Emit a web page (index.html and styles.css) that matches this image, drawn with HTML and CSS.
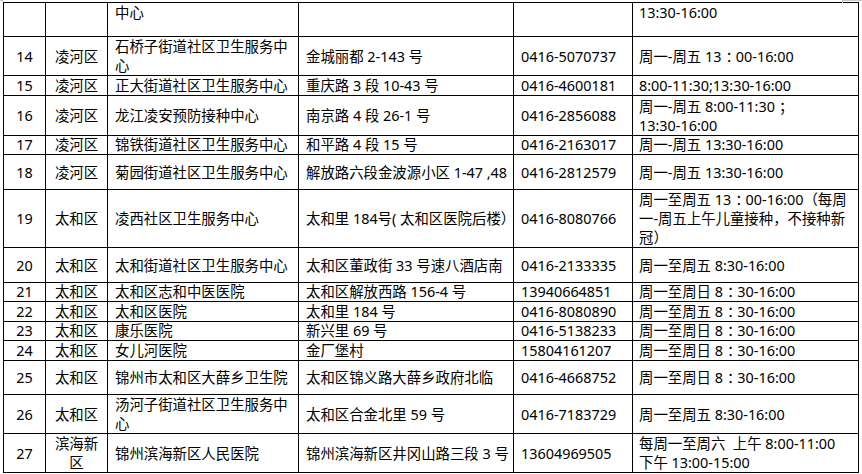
FILE: index.html
```html
<!DOCTYPE html>
<html lang="zh-CN">
<head>
<meta charset="utf-8">
<title>接种点列表</title>
<link rel="stylesheet" href="styles.css">
</head>
<body>
<span class="mark mark-left"></span>
<span class="mark mark-right"></span>
<table class="sites">
  <colgroup>
    <col class="c-no">
    <col class="c-area">
    <col class="c-name">
    <col class="c-addr">
    <col class="c-tel">
    <col class="c-time">
  </colgroup>
  <tbody>
    <tr class="r34 cont">
      <td></td><td></td><td class="l">中心</td><td class="l"></td><td class="l"></td><td class="l">13:30-16:00</td>
    </tr>
    <tr class="r39">
      <td>14</td><td>凌河区</td><td class="l">石桥子街道社区卫生服务中<br>心</td><td class="l">金城丽都 2-143 号</td><td class="l">0416-5070737</td><td class="l">周一-周五 13<span class="fw">：</span>00-16:00</td>
    </tr>
    <tr class="r20">
      <td>15</td><td>凌河区</td><td class="l">正大街道社区卫生服务中心</td><td class="l">重庆路 3 段 10-43 号</td><td class="l">0416-4600181</td><td class="l">8:00-11:30;13:30-16:00</td>
    </tr>
    <tr class="r40">
      <td>16</td><td>凌河区</td><td class="l">龙江凌安预防接种中心</td><td class="l">南京路 4 段 26-1 号</td><td class="l">0416-2856088</td><td class="l">周一-周五 8:00-11:30<span class="fw">；</span><br>13:30-16:00</td>
    </tr>
    <tr class="r19">
      <td>17</td><td>凌河区</td><td class="l">锦铁街道社区卫生服务中心</td><td class="l">和平路 4 段 15 号</td><td class="l">0416-2163017</td><td class="l">周一-周五 13:30-16:00</td>
    </tr>
    <tr class="r35">
      <td>18</td><td>凌河区</td><td class="l">菊园街道社区卫生服务中心</td><td class="l">解放路六段金波源小区 1-47 ,48</td><td class="l">0416-2812579</td><td class="l">周一-周五 13:30-16:00</td>
    </tr>
    <tr class="r58">
      <td>19</td><td>太和区</td><td class="l">凌西社区卫生服务中心</td><td class="l">太和里 184号( 太和区医院后楼）</td><td class="l">0416-8080766</td><td class="l">周一至周五 13<span class="fw">：</span>00-16:00（每周<br>一-周五上午儿童接种，不接种新<br>冠）</td>
    </tr>
    <tr class="r35">
      <td>20</td><td>太和区</td><td class="l">太和街道社区卫生服务中心</td><td class="l">太和区董政街 33 号速八酒店南</td><td class="l">0416-2133335</td><td class="l">周一至周五 8:30-16:00</td>
    </tr>
    <tr class="r19">
      <td>21</td><td>太和区</td><td class="l">太和区志和中医医院</td><td class="l">太和区解放西路 156-4 号</td><td class="l">13940664851</td><td class="l">周一至周日 8<span class="fw">：</span>30-16:00</td>
    </tr>
    <tr class="r20">
      <td>22</td><td>太和区</td><td class="l">太和区医院</td><td class="l">太和里 184 号</td><td class="l">0416-8080890</td><td class="l">周一至周五 8<span class="fw">：</span>30-16:00</td>
    </tr>
    <tr class="r19">
      <td>23</td><td>太和区</td><td class="l">康乐医院</td><td class="l">新兴里 69 号</td><td class="l">0416-5138233</td><td class="l">周一至周日 8<span class="fw">：</span>30-16:00</td>
    </tr>
    <tr class="r20">
      <td>24</td><td>太和区</td><td class="l">女儿河医院</td><td class="l">金厂堡村</td><td class="l">15804161207</td><td class="l">周一至周日 8<span class="fw">：</span>30-16:00</td>
    </tr>
    <tr class="r34">
      <td>25</td><td>太和区</td><td class="l">锦州市太和区大薛乡卫生院</td><td class="l">太和区锦义路大薛乡政府北临</td><td class="l">0416-4668752</td><td class="l">周一至周日 8<span class="fw">：</span>30-16:00</td>
    </tr>
    <tr class="r39">
      <td>26</td><td>太和区</td><td class="l">汤河子街道社区卫生服务中<br>心</td><td class="l">太和区合金北里 59 号</td><td class="l">0416-7183729</td><td class="l">周一至周五 8:30-16:00</td>
    </tr>
    <tr class="r39">
      <td>27</td><td>滨海新<br>区</td><td class="l">锦州滨海新区人民医院</td><td class="l">锦州滨海新区井冈山路三段 3 号</td><td class="l">13604969505</td><td class="l">每周一至周六&nbsp; 上午 8:00-11:00<br>下午 13:00-15:00</td>
    </tr>
  </tbody>
</table>
</body>
</html>
```

FILE: styles.css
```css
html, body {
  margin: 0;
  padding: 0;
  background: #ffffff;
}

body {
  padding: 2px 0 0 3px;
  font-family: "Noto Sans", "Noto Sans CJK SC", sans-serif;
  font-size: 14.4px;
  color: #000000;
  position: relative;
  width: 862px;
  height: 474px;
  box-sizing: border-box;
  overflow: hidden;
}

.mark {
  position: absolute;
  top: 0;
  background: transparent;
}

.mark-left {
  left: 0;
  width: 3px;
  height: 2px;
  border-top: 1px solid #c8c8c8;
  border-right: 1px solid #c8c8c8;
  box-sizing: border-box;
}

.mark-right {
  left: 842px;
  width: 20px;
  height: 3px;
  border-top: 1px solid #c8c8c8;
  border-left: 1px solid #c8c8c8;
  box-sizing: border-box;
}

.sites {
  border-collapse: separate;
  border-spacing: 0;
  table-layout: fixed;
  width: 856px;
  border-top: 1px solid #000;
  border-left: 1px solid #000;
}

.c-no { width: 42px; }
.c-area { width: 62px; }
.c-name { width: 191px; }
.c-addr { width: 215px; }
.c-tel { width: 119px; }
.c-time { width: 226px; }

.sites td {
  border-right: 1px solid #000;
  border-bottom: 1px solid #000;
  padding: 0;
  text-align: center;
  vertical-align: middle;
  white-space: nowrap;
  overflow: hidden;
  line-height: 19px;
  box-sizing: border-box;
}

.sites td.l {
  text-align: left;
  padding-left: 7px;
}

.sites td.l:last-child {
  padding-left: 6px;
}

/* full-width colon/semicolon: glyph centred in its em box as in the source font */
.fw {
  padding-left: 4px;
  letter-spacing: -4px;
}

.cont td {
  vertical-align: top;
}

.r19 td { height: 19px; line-height: 18px; }
.r20 td { height: 20px; }
.r34 td { height: 34px; }
.r35 td { height: 35px; }
.r39 td { height: 39px; }
.r40 td { height: 40px; }
.r58 td { height: 58px; }
```
